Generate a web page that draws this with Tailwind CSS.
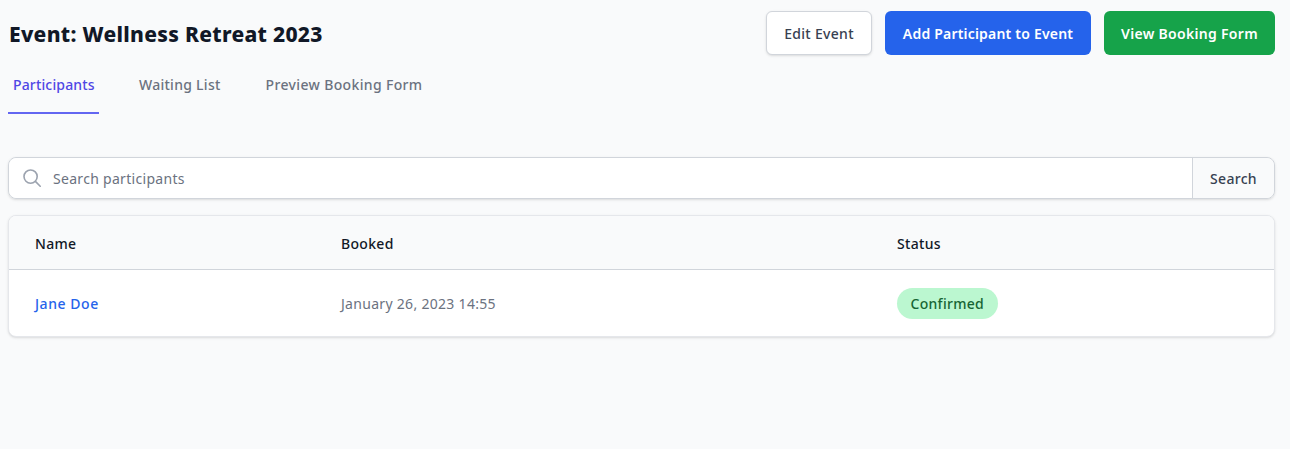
<!doctype html>
<html>
<head>
<meta charset="utf-8">
<script src="https://cdn.jsdelivr.net/npm/@tailwindcss/browser@4"></script>
</head>
<body class="bg-[#f9fafb] font-['Noto_Sans',sans-serif] h-[449px] overflow-hidden tracking-[0.3px]">
<div class="w-[1267px] ml-2">
  <div class="flex items-center justify-between pt-[11px]">
    <h1 class="ml-px mt-[2px] text-[21px] leading-7 font-extrabold tracking-[0.3px] text-[#111827]">Event: Wellness Retreat 2023</h1>
    <div class="flex gap-[13px]">
      <button class="h-11 w-[106px] rounded-md border border-[#d1d5db] bg-white pt-[2px] text-sm font-medium text-[#374151] shadow-sm">Edit Event</button>
      <button class="h-11 w-[206px] rounded-md bg-[#2563eb] pt-[2px] text-sm font-semibold tracking-[0.2px] text-white">Add Participant to Event</button>
      <button class="h-11 w-[171px] rounded-md bg-[#16a34a] pt-[2px] text-sm font-semibold text-white">View Booking Form</button>
    </div>
  </div>
  <nav class="mt-3 flex gap-[34px] text-sm font-medium text-[#6b7280]">
    <a class="h-[47px] w-[91px] border-b-2 border-[#6366f1] pl-[5px] pt-2 tracking-[0.15px] text-[#4f46e5]">Participants</a>
    <a class="h-[47px] px-[6px] pt-2 tracking-[0.27px]">Waiting List</a>
    <a class="h-[47px] pl-[5px] pt-2 tracking-[0.35px]">Preview Booking Form</a>
  </nav>
  <div class="mt-[43px] flex h-[42px] rounded-lg border border-[#d1d5db] shadow-sm">
    <div class="flex flex-1 items-center rounded-l-lg bg-white pl-[14px]">
      <svg class="h-[18px] w-[18px] text-[#9ca3af]" viewBox="0 0 18 18" fill="none" stroke="currentColor" stroke-width="1.6" stroke-linecap="round"><circle cx="7.6" cy="7.6" r="6.6"/><path d="M12.4 12.4 17.2 17.2"/></svg>
      <span class="ml-3 pt-[2px] text-sm text-[#6b7280]">Search participants</span>
    </div>
    <button class="w-[82px] rounded-r-lg border-l border-[#d1d5db] bg-[#f9fafb] pt-[2px] text-sm font-medium text-[#374151]">Search</button>
  </div>
  <div class="mt-4 overflow-hidden rounded-lg border border-[#e5e7eb] bg-white shadow-sm">
    <div class="grid h-[54px] grid-cols-[306px_556px_1fr] items-center border-b border-[#d1d5db] bg-[#f9fafb] pl-[26px] pt-[2px] text-sm font-medium text-[#111827]">
      <span>Name</span><span>Booked</span><span>Status</span>
    </div>
    <div class="grid h-[66px] grid-cols-[306px_556px_1fr] items-center pl-[26px] text-sm">
      <span class="pt-[2px] font-medium tracking-[0.55px] text-[#2563eb]">Jane Doe</span>
      <span class="pt-[2px] text-[#6b7280]">January 26, 2023 14:55</span>
      <span class="flex"><span class="rounded-full bg-[#bbf7d0] px-[13.5px] pt-[6px] pb-[5px] font-medium text-[#166534]">Confirmed</span></span>
    </div>
  </div>
</div>
</body>
</html>
